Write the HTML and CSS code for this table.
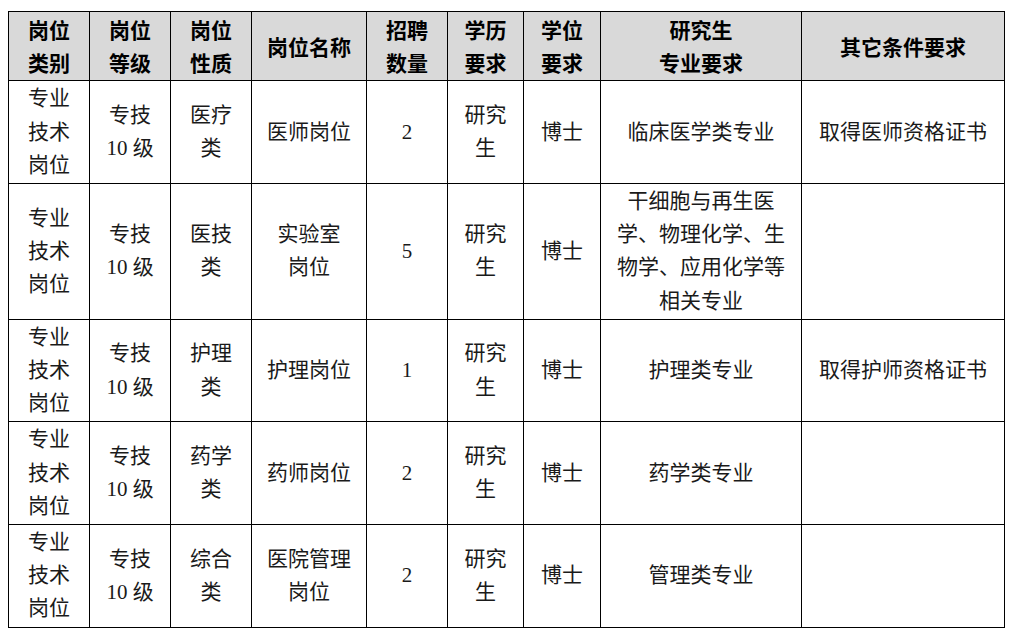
FILE: index.html
```html
<!DOCTYPE html>
<html lang="zh-CN">
<head>
<meta charset="utf-8">
<title>岗位表</title>
<link rel="stylesheet" href="styles.css">
</head>
<body>
<table class="jobs">
  <colgroup>
    <col class="c-cat"><col class="c-lvl"><col class="c-type"><col class="c-name"><col class="c-num"><col class="c-edu"><col class="c-deg"><col class="c-major"><col class="c-other">
  </colgroup>
  <thead>
    <tr>
      <th>岗位<br>类别</th>
      <th>岗位<br>等级</th>
      <th>岗位<br>性质</th>
      <th>岗位名称</th>
      <th>招聘<br>数量</th>
      <th>学历<br>要求</th>
      <th>学位<br>要求</th>
      <th>研究生<br>专业要求</th>
      <th>其它条件要求</th>
    </tr>
  </thead>
  <tbody>
    <tr>
      <td>专业<br>技术<br>岗位</td>
      <td>专技<br>10 级</td>
      <td>医疗<br>类</td>
      <td>医师岗位</td>
      <td>2</td>
      <td>研究<br>生</td>
      <td>博士</td>
      <td>临床医学类专业</td>
      <td>取得医师资格证书</td>
    </tr>
    <tr>
      <td>专业<br>技术<br>岗位</td>
      <td>专技<br>10 级</td>
      <td>医技<br>类</td>
      <td>实验室<br>岗位</td>
      <td>5</td>
      <td>研究<br>生</td>
      <td>博士</td>
      <td>干细胞与再生医<br>学、物理化学、生<br>物学、应用化学等<br>相关专业</td>
      <td></td>
    </tr>
    <tr>
      <td>专业<br>技术<br>岗位</td>
      <td>专技<br>10 级</td>
      <td>护理<br>类</td>
      <td>护理岗位</td>
      <td>1</td>
      <td>研究<br>生</td>
      <td>博士</td>
      <td>护理类专业</td>
      <td>取得护师资格证书</td>
    </tr>
    <tr>
      <td>专业<br>技术<br>岗位</td>
      <td>专技<br>10 级</td>
      <td>药学<br>类</td>
      <td>药师岗位</td>
      <td>2</td>
      <td>研究<br>生</td>
      <td>博士</td>
      <td>药学类专业</td>
      <td></td>
    </tr>
    <tr>
      <td>专业<br>技术<br>岗位</td>
      <td>专技<br>10 级</td>
      <td>综合<br>类</td>
      <td>医院管理<br>岗位</td>
      <td>2</td>
      <td>研究<br>生</td>
      <td>博士</td>
      <td>管理类专业</td>
      <td></td>
    </tr>
  </tbody>
</table>
</body>
</html>
```
FILE: styles.css
```css
html, body {
  margin: 0;
  padding: 0;
  background: #ffffff;
}

body {
  padding: 11px 0 0 8px;
}

.jobs {
  border-collapse: collapse;
  table-layout: fixed;
  width: 996px;
  font-family: "Liberation Serif", "Noto Sans CJK SC", serif;
  font-size: 21px;
  line-height: 33.2px;
  color: #1a1a1a;
}

.c-cat { width: 81px; }
.c-lvl { width: 81px; }
.c-type { width: 81px; }
.c-name { width: 115px; }
.c-num { width: 81px; }
.c-edu { width: 76px; }
.c-deg { width: 77px; }
.c-major { width: 201px; }
.c-other { width: 203px; }

.jobs th,
.jobs td {
  border: 1px solid #000000;
  padding: 1px 2px;
  text-align: center;
  vertical-align: middle;
  white-space: nowrap;
}

.jobs th {
  background: #d9d9d9;
  font-family: "Noto Sans CJK SC", sans-serif;
  font-weight: 700;
  color: #000000;
}

.jobs td {
  font-weight: 400;
}
```
